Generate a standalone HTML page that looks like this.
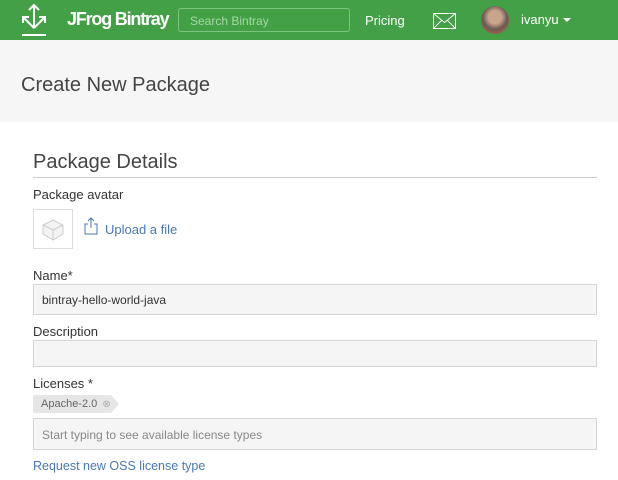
<!DOCTYPE html>
<html><head><style>
*{box-sizing:border-box;margin:0;padding:0}
body{width:618px;height:480px;overflow:hidden;background:#fff;font-family:"Liberation Sans",sans-serif;color:#333;position:relative}
.hdr{position:absolute;left:0;top:0;width:618px;height:40px;background:#43a047}
.abs{position:absolute;white-space:nowrap}
.page{position:absolute;top:40px;left:0;width:618px;height:82px;background:#f6f6f6}
.inp{position:absolute;left:33px;width:564px;border:1px solid #d5d5d5;background:#f5f5f5;font-size:12px;color:#333;padding-left:8px;white-space:nowrap}
.lbl{position:absolute;left:33px;font-size:13px;color:#333}
</style></head><body>
<div class="hdr">
<svg class="abs" style="left:20px;top:3px" width="28" height="34" viewBox="0 0 28 34"><g fill="none" stroke="#fff" stroke-width="2"><path d="M14 2v23M9 7l5-5 5 5M14 25L3 14M3 20v-6h6M14 25l11-11M25 20v-6h-6"/><path d="M2 32h24"/></g></svg>
<div class="abs" style="left:67px;top:9px;color:#fff;font-weight:bold;font-size:18px;letter-spacing:-1.2px">JFrog Bintray</div>
<div class="abs" style="left:178px;top:8px;width:172px;height:24px;border:1px solid #7cc37f;border-radius:3px;color:#a5d6a7;font-size:12px;padding:5px 0 0 11px">Search Bintray</div>
<div class="abs" style="left:365px;top:13px;color:#fff;font-size:13px">Pricing</div>
<svg class="abs" style="left:433px;top:13px" width="23" height="16"><rect x="0.5" y="0.5" width="22" height="15" fill="none" stroke="#fff"/><path d="M0.5 0.5l11 9 11-9M0.5 15.5l8-8M22.5 15.5l-8-8" fill="none" stroke="#fff"/></svg>
<div class="abs" style="left:481px;top:6px;width:28px;height:28px;border-radius:50%;background:radial-gradient(circle at 50% 40%,#c9a58e 0 30%,#6b5a52 55%,#d06060 100%)"></div>
<div class="abs" style="left:521px;top:12px;color:#fff;font-size:13px">ivanyu</div>
<div class="abs" style="left:563px;top:18px;border:4px solid transparent;border-top-color:#fff;border-bottom:0"></div>
</div>
<div class="page"><div class="abs" style="left:21px;top:34px;font-size:20px;color:#444">Create New Package</div></div>
<div class="abs" style="left:33px;top:151px;font-size:20px;color:#444">Package Details</div>
<div class="abs" style="left:33px;top:177px;width:564px;height:1px;background:#ccc"></div>
<div class="lbl" style="top:187px">Package avatar</div>
<div class="abs" style="left:33px;top:209px;width:40px;height:40px;border:1px solid #ddd"></div>
<svg class="abs" style="left:40px;top:217px" width="26" height="26" viewBox="0 0 26 26"><path d="M3 8l10-5 10 5v9l-10 6-10-6z" fill="#f3f3f3" stroke="#ccc"/><path d="M3 8l10 5 10-5M13 13v10" fill="none" stroke="#ccc"/></svg>
<svg class="abs" style="left:84px;top:217px" width="14" height="18"><path d="M7 1v10M4 4l3-3 3 3M4 7H1v10h12V7h-3" fill="none" stroke="#4a78b5"/></svg>
<div class="abs" style="left:105px;top:222px;font-size:13px;color:#4a78b5">Upload a file</div>
<div class="lbl" style="top:268px">Name*</div>
<div class="inp" style="top:284px;height:31px;padding-top:8px">bintray-hello-world-java</div>
<div class="lbl" style="top:324px">Description</div>
<div class="inp" style="top:340px;height:27px"></div>
<div class="lbl" style="top:376px">Licenses *</div>
<div class="abs" style="left:33px;top:395px;width:78px;height:18px;background:#e6e6e6;font-size:11px;color:#666;padding:3px 0 0 8px">Apache-2.0 <span style="font-size:10px;color:#aaa;margin-left:2px">⊗</span></div>
<div class="abs" style="left:111px;top:395px;border:9px solid transparent;border-left:8px solid #e6e6e6;border-right:0"></div>
<div class="inp" style="top:418px;height:32px;padding-top:9px;color:#888">Start typing to see available license types</div>
<div class="abs" style="left:33px;top:459px;font-size:12.5px;color:#4a78b5">Request new OSS license type</div>
</body></html>
